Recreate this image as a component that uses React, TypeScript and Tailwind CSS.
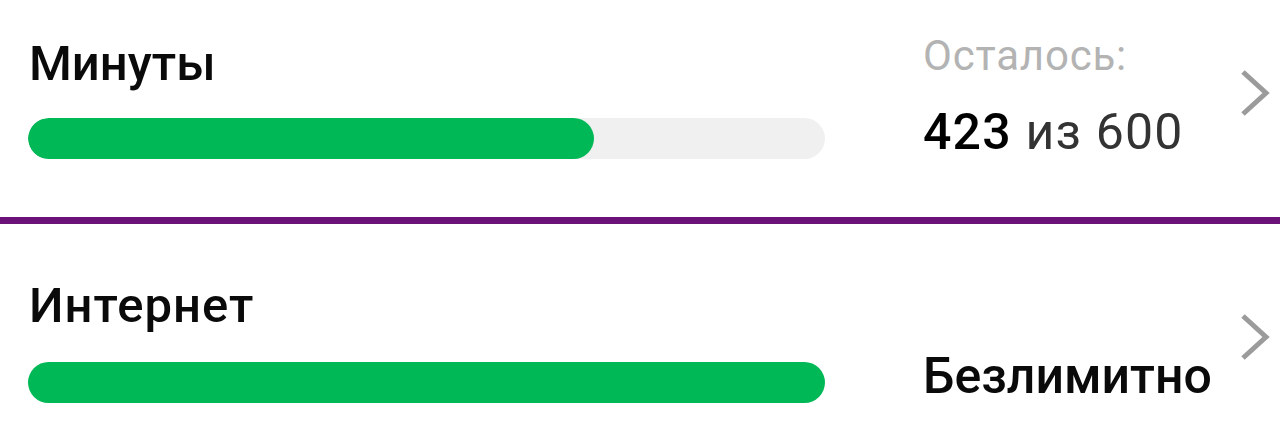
import React from "react";

const Chevron = () => (
  <svg width="32" height="50" viewBox="0 0 32 50" className="block">
    <polyline points="4,3 27,24 4,45" fill="none" stroke="#9b9b9b" strokeWidth="5" strokeLinecap="butt" strokeLinejoin="miter" />
  </svg>
);

export default function App() {
  return (
    <div className="w-[1280px] h-[426px] bg-white overflow-hidden" style={{ fontFamily: "Roboto, 'Liberation Sans', sans-serif" }}>
      {/* Row 1 */}
      <div className="h-[217px] flex">
        <div className="w-[797px] ml-[28px] pt-[39px] flex flex-col">
          <div className="text-[49px] leading-none font-medium text-[#0a0a0a] ml-[1px]">Минуты</div>
          <div className="mt-[30px] h-[41px] rounded-full bg-[#f0f0f0] overflow-hidden">
            <div className="h-full rounded-full bg-[#00b956]" style={{ width: "566px" }} />
          </div>
        </div>
        <div className="ml-[98px] pt-[35px] flex flex-col">
          <div className="text-[42px] leading-none tracking-[0.8px] text-[#b3b3b3]">Осталось:</div>
          <div className="mt-[30px] text-[50px] leading-none tracking-[1.2px] text-[#333]">
            <span className="font-medium text-black">423</span> из 600
          </div>
        </div>
        <div className="ml-auto mr-[9px] pt-[69px]">
          <Chevron />
        </div>
      </div>
      <div className="h-[7px] bg-[#6b1278]" />
      {/* Row 2 */}
      <div className="h-[202px] flex">
        <div className="w-[797px] ml-[28px] pt-[57px] flex flex-col">
          <div className="text-[49px] leading-none font-medium tracking-[1px] text-[#0a0a0a] ml-[1px]">Интернет</div>
          <div className="mt-[32px] h-[41px] rounded-full bg-[#00b956]" />
        </div>
        <div className="ml-[98px] pt-[127px]">
          <div className="text-[50px] leading-none font-medium text-[#0a0a0a]">Безлимитно</div>
        </div>
        <div className="ml-auto mr-[9px] pt-[89px]">
          <Chevron />
        </div>
      </div>
    </div>
  );
}
